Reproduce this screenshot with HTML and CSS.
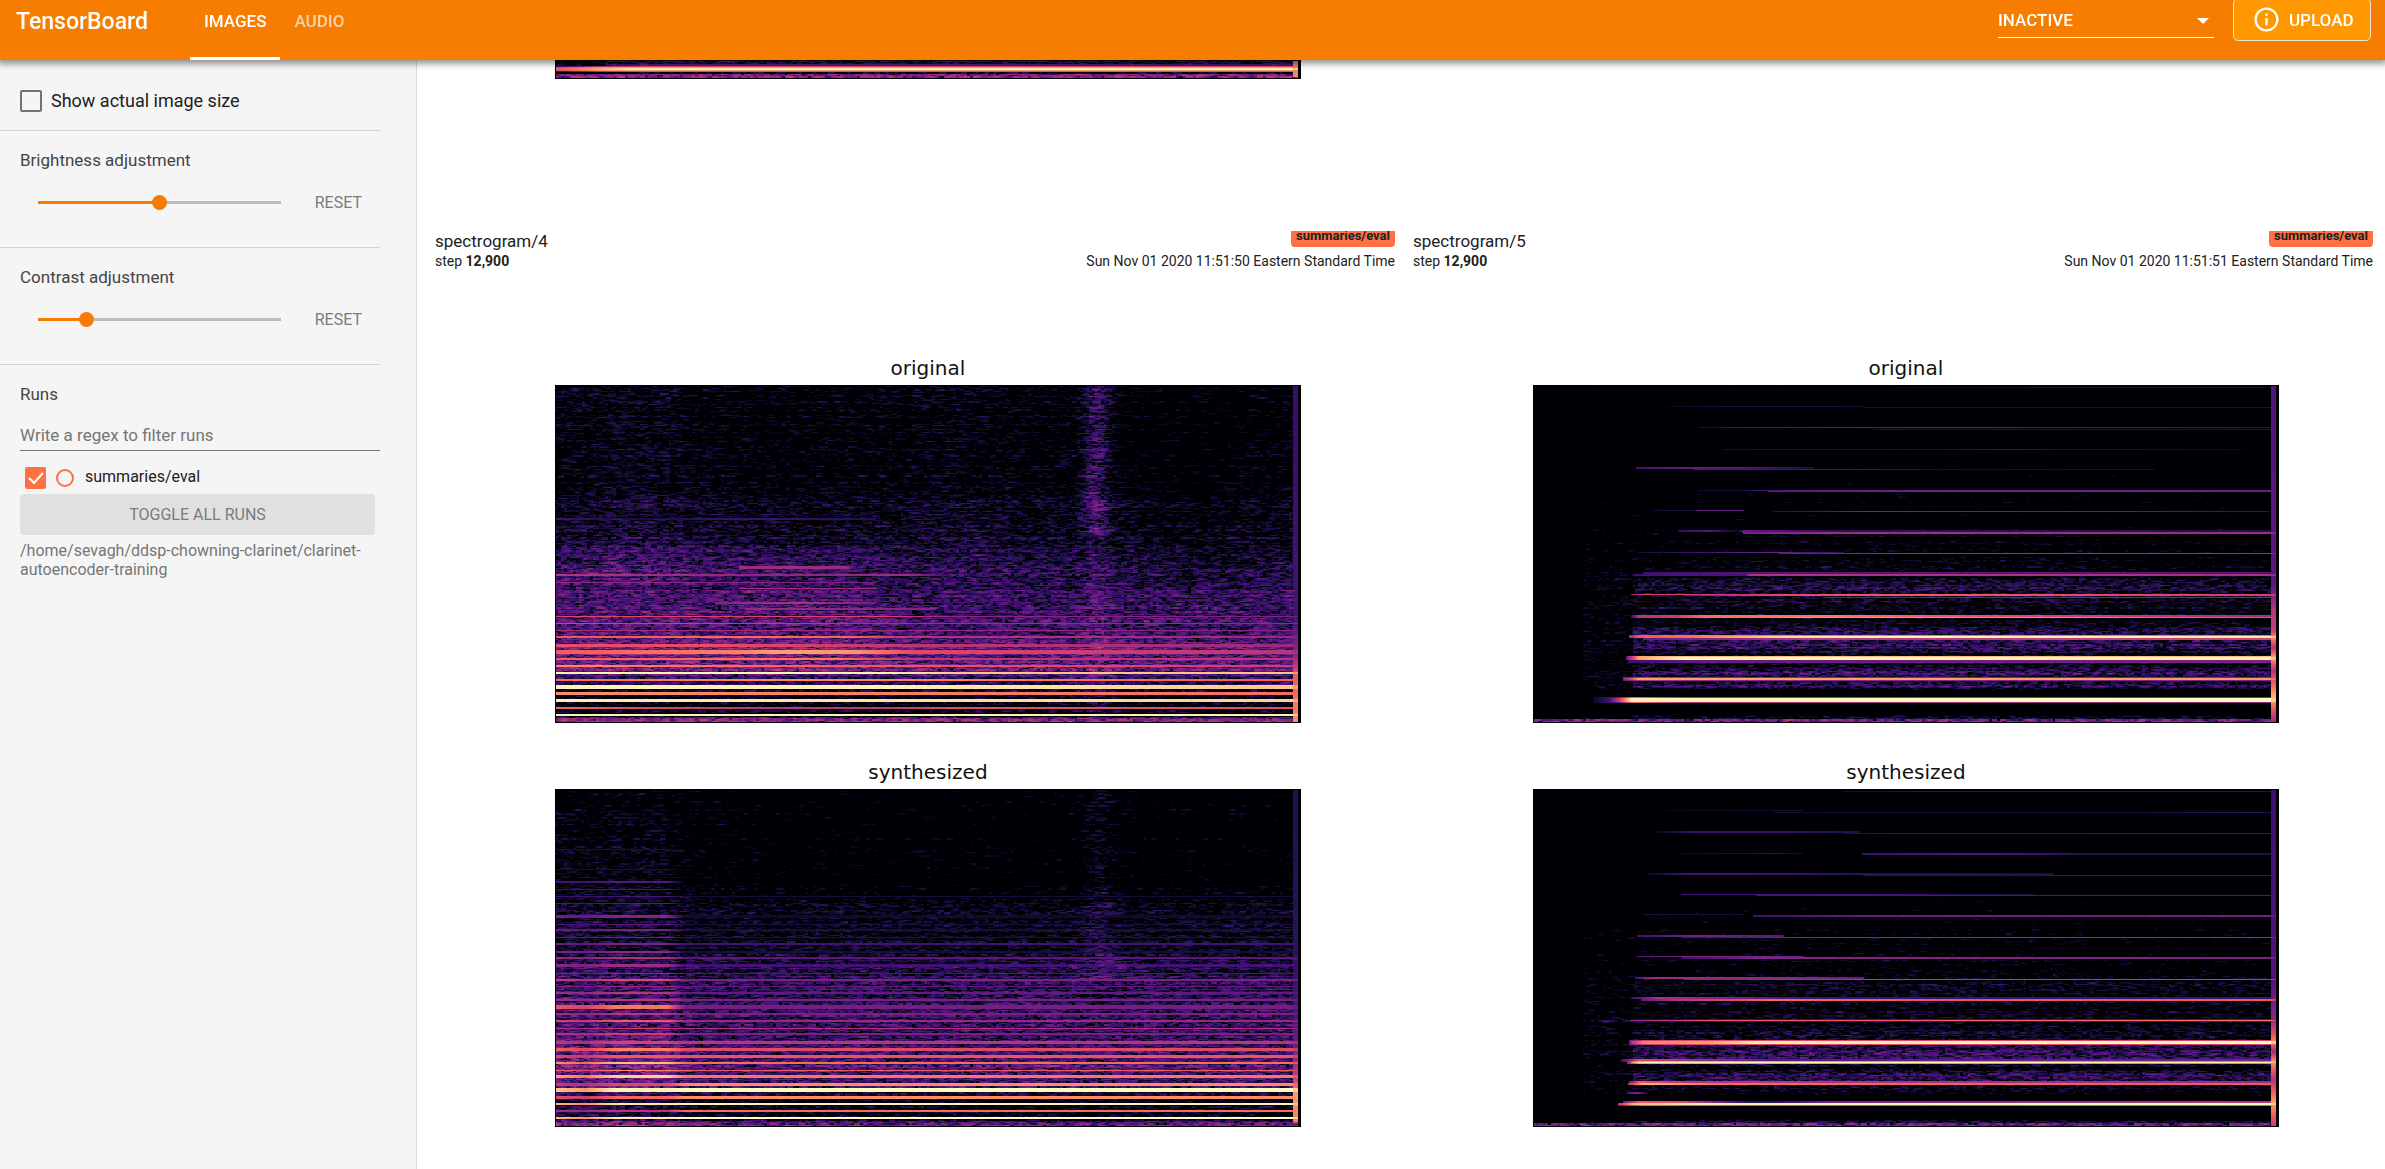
FILE: index.html
```html
<!DOCTYPE html>
<html lang="en">
<head>
<meta charset="utf-8">
<title>TensorBoard</title>
<link rel="stylesheet" href="styles.css">
</head>
<body>
<header class="toolbar">
  <h1 class="brand">TensorBoard</h1>
  <nav class="tabs">
    <a class="tab tab-active" href="#images">IMAGES</a>
    <a class="tab" href="#audio">AUDIO</a>
  </nav>
  <div class="inactive">
    <select class="inactive-select" aria-label="Inactive dashboards">
      <option>INACTIVE</option>
    </select>
    <svg class="caret" viewBox="0 0 12 6" aria-hidden="true"><path d="M0 0h12L6 6z" fill="#fff"/></svg>
  </div>
  <button class="upload" type="button">
    <svg class="upload-icon" viewBox="0 0 24 24" aria-hidden="true"><path fill="#fff" d="M11 17h2v-6h-2v6zm1-15C6.480 2 2 6.480 2 12s4.480 10 10 10 10-4.480 10-10S17.520 2 12 2zm0 18c-4.410 0-8-3.590-8-8s3.590-8 8-8 8 3.590 8 8-3.590 8-8 8zM11 9h2V7h-2v2z"/></svg>
    <span>UPLOAD</span>
  </button>
</header>

<div class="page">
  <aside class="sidebar">
    <section class="section section-size">
      <label class="size-label"><input class="size-box" type="checkbox">Show actual image size</label>
    </section>
    <section class="section section-slider">
      <label class="section-title" for="brightness">Brightness adjustment</label>
      <div class="slider-row">
        <input class="slider slider-brightness" id="brightness" type="range" min="0" max="100" value="50">
        <button class="reset" type="button">RESET</button>
      </div>
    </section>
    <section class="section section-slider">
      <label class="section-title" for="contrast">Contrast adjustment</label>
      <div class="slider-row">
        <input class="slider slider-contrast" id="contrast" type="range" min="0" max="100" value="18">
        <button class="reset" type="button">RESET</button>
      </div>
    </section>
    <section class="section section-runs">
      <label class="section-title" for="filter">Runs</label>
      <input class="filter" id="filter" type="text" placeholder="Write a regex to filter runs">
      <div class="run">
        <input class="run-box" id="run" type="checkbox" checked>
        <span class="run-dot"></span>
        <label class="run-name" for="run">summaries/eval</label>
      </div>
      <button class="toggle" type="button">TOGGLE ALL RUNS</button>
      <p class="logdir">/home/sevagh/ddsp-chowning-clarinet/clarinet-autoencoder-training</p>
    </section>
  </aside>

  <main class="cards">
    <article class="card card-scrolled">
      <div class="figure"><canvas class="plot" id="previous" width="746" height="19"></canvas></div>
    </article>
    <article class="card">
      <div class="card-head">
        <h2 class="tag">spectrogram/4</h2>
        <div class="badge-clip"><span class="badge">summaries/eval</span></div>
        <div class="step">step <b>12,900</b></div>
        <div class="time">Sun Nov 01 2020 11:51:50 Eastern Standard Time</div>
      </div>
      <div class="figure">
        <h3 class="plot-title">original</h3>
        <canvas class="plot" id="original4" width="746" height="338"></canvas>
        <h3 class="plot-title">synthesized</h3>
        <canvas class="plot" id="synth4" width="746" height="338"></canvas>
      </div>
    </article>
    <article class="card">
      <div class="card-head">
        <h2 class="tag">spectrogram/5</h2>
        <div class="badge-clip"><span class="badge">summaries/eval</span></div>
        <div class="step">step <b>12,900</b></div>
        <div class="time">Sun Nov 01 2020 11:51:51 Eastern Standard Time</div>
      </div>
      <div class="figure">
        <h3 class="plot-title">original</h3>
        <canvas class="plot" id="original5" width="746" height="338"></canvas>
        <h3 class="plot-title">synthesized</h3>
        <canvas class="plot" id="synth5" width="746" height="338"></canvas>
      </div>
    </article>
  </main>
</div>
<script src="spectrogram.js"></script>
</body>
</html>
```
FILE: styles.css
```css
* { box-sizing: border-box; }

body {
  margin: 0;
  background: #fff;
  color: #212121;
  font-family: Roboto, sans-serif;
  font-size: 16px;
}

h1, h2, h3, p { margin: 0; font-weight: 400; }
button, input, select { font-family: inherit; font-size: 16px; margin: 0; }

.toolbar {
  position: relative;
  z-index: 1;
  display: flex;
  align-items: flex-start;
  height: 60px;
  padding: 0 14px 0 16px;
  background: #f77d00;
  color: #fff;
  font-size: 17px;
  box-shadow: 0 2px 6px 2px rgba(0, 0, 0, .4);
}

.brand { width: 174px; font-size: 23px; font-weight: 500; line-height: 44px; }

.tabs { display: flex; flex: 1; }
.tab {
  height: 60px;
  padding: 0 14px;
  color: rgba(255, 255, 255, .65);
  font-weight: 500;
  line-height: 43px;
  text-decoration: none;
}
.tab-active { color: #fff; border-bottom: 3px solid #fff; }

.inactive { position: relative; width: 216px; margin-right: 19px; }
.inactive-select {
  width: 100%;
  height: 38px;
  padding: 3px 0 0;
  border: 0;
  border-bottom: 1px solid #fff;
  border-radius: 0;
  background: transparent;
  color: #fff;
  font-size: 17px;
  font-weight: 500;
  appearance: none;
}
.caret { position: absolute; top: 18px; right: 5px; width: 12px; height: 6px; }

.upload {
  display: flex;
  align-items: center;
  gap: 8px;
  width: 138px;
  height: 43px;
  margin-top: -2px;
  padding: 0 0 0 18px;
  border: 1px solid #f4e3cb;
  border-radius: 5px;
  background: #ff9800;
  color: #fff;
  font-size: 17px;
  font-weight: 500;
}
.upload-icon { width: 29px; height: 29px; }

.page { display: flex; min-height: calc(100vh - 60px); }

.sidebar {
  flex: none;
  width: 417px;
  padding-right: 36px;
  border-right: 1px solid #dcdcdc;
  background: #f5f5f5;
}
.section { padding: 0 0 0 20px; border-bottom: 1px solid #d2d2d2; }
.section-size { height: 71px; padding-top: 30px; }
.section-slider { height: 117px; padding-top: 18px; }
.section-runs { padding-top: 18px; border-bottom: 0; }

.size-label { display: flex; align-items: center; gap: 9px; font-size: 18px; line-height: 22px; }
.size-box {
  width: 22px;
  height: 22px;
  border: 2px solid #737373;
  border-radius: 2px;
  appearance: none;
}

.section-title { display: block; color: #444; font-size: 17px; line-height: 22px; }

.slider-row { display: flex; align-items: center; justify-content: space-between; height: 42px; margin-top: 10px; padding: 0 18px; }
.slider { width: 243px; height: 16px; background: transparent; appearance: none; }
.slider::-webkit-slider-runnable-track { height: 3px; background: linear-gradient(to right, #f77d00 20%, #bdbdbd 20%); }
.slider-brightness::-webkit-slider-runnable-track { background: linear-gradient(to right, #f77d00 50%, #bdbdbd 50%); }
.slider::-webkit-slider-thumb {
  width: 15px;
  height: 15px;
  margin-top: -6px;
  border-radius: 50%;
  background: #f77d00;
  appearance: none;
}
.reset { padding: 0; border: 0; background: transparent; color: #7b7b7b; }

.filter {
  display: block;
  width: 100%;
  height: 32px;
  margin-top: 14px;
  padding: 0;
  border: 0;
  border-bottom: 1px solid #737373;
  background: transparent;
  font-size: 17px;
}
.filter::placeholder { color: #757575; opacity: 1; }

.run { display: flex; align-items: center; height: 22px; margin-top: 16px; padding-left: 5px; }
.run-box {
  width: 21px;
  height: 22px;
  border-radius: 2px;
  background: #ff7043 url("data:image/svg+xml,%3Csvg xmlns='http://www.w3.org/2000/svg' viewBox='0 0 21 22'%3E%3Cpath d='M4 11l5 5 9-10' fill='none' stroke='white' stroke-width='2'/%3E%3C/svg%3E");
  appearance: none;
}
.run-dot { width: 18px; height: 18px; margin: 0 11px 0 10px; border: 2px solid #ff7043; border-radius: 50%; }
.run-name { padding-bottom: 3px; }

.toggle {
  display: block;
  width: 355px;
  height: 41px;
  margin-top: 5px;
  border: 0;
  border-radius: 4px;
  background: #e0e0e0;
  color: #7b7b7b;
}
.logdir { margin-top: 6px; color: #757575; line-height: 19px; }

.cards {
  display: grid;
  flex: 1;
  grid-template-columns: 1fr 1fr;
  align-content: start;
  column-gap: 18px;
  padding: 0 12px 40px 18px;
}
.card-scrolled { grid-column: 1 / 2; margin-bottom: 152px; }
.card-scrolled + .card { grid-column: 1; }

.card-head { display: grid; grid-template-columns: 1fr auto; row-gap: 2px; margin-bottom: 84px; }
.tag { font-size: 17px; line-height: 20px; }
.badge-clip { display: flex; align-items: flex-end; justify-content: flex-end; height: 16px; overflow: hidden; }
.badge { padding: 0 5px; border-radius: 4px; background: #ff7043; font-size: 13px; font-weight: 700; line-height: 22px; }
.step, .time { font-size: 14px; line-height: 16px; }
.time { text-align: right; }

.figure { padding: 0 9.8% 0 12.5%; }
.plot-title { padding-bottom: 2px; font-family: "DejaVu Sans", sans-serif; font-size: 20px; line-height: 30px; text-align: center; color: #111; }
.plot { display: block; width: 100%; height: auto; }
.plot + .plot-title { margin-top: 34px; }
```
FILE: spectrogram.js
```javascript
// Magma colour map, sampled at even steps.
const MAGMA = [
  [0, 0, 4], [12, 9, 38], [28, 16, 68], [54, 16, 107], [79, 18, 123], [104, 28, 129],
  [129, 37, 129], [155, 46, 127], [181, 54, 122], [207, 64, 112], [229, 80, 100],
  [244, 104, 92], [251, 135, 97], [254, 167, 114], [254, 196, 136], [254, 227, 165], [252, 253, 191]
];

function colour(v) {
  const t = Math.max(0, Math.min(0.9999, v)) * 16;
  const i = Math.floor(t), f = t - i;
  return MAGMA[i].map((c, k) => c + (MAGMA[i + 1][k] - c) * f);
}

// Linear interpolation through [position, value] stops.
function ramp(stops, p) {
  if (p <= stops[0][0]) return stops[0][1];
  for (let i = 1; i < stops.length; i++) {
    if (p <= stops[i][0]) {
      const [a, va] = stops[i - 1], [b, vb] = stops[i];
      return va + (vb - va) * (p - a) / (b - a);
    }
  }
  return stops[stops.length - 1][1];
}

function randomSource(seed) {
  return () => {
    seed = (seed + 0x6D2B79F5) | 0;
    let t = Math.imul(seed ^ (seed >>> 15), 1 | seed);
    t = (t + Math.imul(t ^ (t >>> 7), 61 | t)) ^ t;
    return ((t ^ (t >>> 14)) >>> 0) / 4294967296;
  };
}

// Log magnitude of smoothed complex noise, one value per spectrogram cell.
function noiseGrid(cols, rows, seed) {
  const rnd = randomSource(seed);
  const g = () => rnd() + rnd() + rnd() - 1.5;
  const grid = [];
  for (let r = 0; r < rows; r++) {
    const row = new Float32Array(cols);
    const gain = (rnd() - 0.5) * 0.6;
    let p1 = [g(), g()], p2 = [g(), g()];
    for (let c = 0; c < cols; c++) {
      const p = [g(), g()];
      const a = 0.8 * p[0] + p1[0] + 0.8 * p2[0], b = 0.8 * p[1] + p1[1] + 0.8 * p2[1];
      row[c] = Math.max(-2.5, Math.log((a * a + b * b) * 0.8 + 1e-4) / 2 + gain);
      p2 = p1; p1 = p;
    }
    grid.push(row);
  }
  return grid;
}

const CELL_W = 2.9, CELL_H = 1.32;

// lines: [y, thickness, [[x, value], ...]]; floor(x, y): local noise level.
function draw(id, seed, floor, lines, edge) {
  const canvas = document.getElementById(id);
  const w = canvas.width, h = canvas.height;
  const ctx = canvas.getContext("2d");
  const img = ctx.createImageData(w, h);
  const grid = noiseGrid(Math.ceil(w / CELL_W) + 1, Math.ceil(h / CELL_H) + 1, seed);
  for (let y = 0; y < h; y++) {
    const active = lines.filter(l => y >= l[0] - Math.floor(l[1] / 2) && y < l[0] - Math.floor(l[1] / 2) + l[1]);
    for (let x = 0; x < w; x++) {
      let v = floor(x, y) + 0.16 * grid[Math.floor(y / CELL_H)][Math.floor(x / CELL_W)];
      for (const l of active) {
        if (x >= l[2][0][0] && x <= l[2][l[2].length - 1][0]) v = Math.max(v, ramp(l[2], x));
      }
      if (x >= w - 8 && x < w - 3) v = Math.max(v * 0.9, ramp(edge, y));
      if (x < 1 || x >= w - 3 || y < 1 || y >= h - 1) v = 0;
      const c = colour(v), o = (y * w + x) * 4;
      img.data[o] = c[0]; img.data[o + 1] = c[1]; img.data[o + 2] = c[2]; img.data[o + 3] = 255;
    }
  }
  ctx.putImageData(img, 0, 0);
}

const END = 742;
const bump = (x, centre, width) => Math.exp(-(((x - centre) / width) ** 2));

draw("previous", 3,
  (x, y) => (y < 6 ? 0.18 : y < 14 ? 0.1 : 0.42) - (x < 50 && y < 14 ? 0.15 : 0),
  [
    [5, 2, [[50, 0.2], [120, 0.3], [END, 0.25]]],
    [9, 6, [[0, 0.2], [50, 0.5], [90, 0.62], [END, 0.62]]],
    [9, 4, [[0, 0.6], [50, 0.8], [END, 0.8]]],
    [9, 2, [[0, 0.65], [50, 0.85], [80, 0.97], [END, 0.97]]]
  ], [[0, 0.7], [16, 0.75], [17, 0]]);

const floor4 = [[0, 0], [85, 0], [120, 0.05], [160, 0.09], [180, 0.15], [210, 0.2], [240, 0.26], [262, 0.32], [285, 0.33], [295, 0.2], [305, 0.08], [320, 0.02], [331, 0.05], [333, 0.4], [336, 0.45]];
draw("original4", 11,
  (x, y) => ramp(floor4, y)
    + (y < 330 ? 0.24 * bump(x, 541, 14) * (y < 150 ? 1 : 0.35) : 0)
    + (y < 200 ? 0.06 * bump(x, 80, 60) + 0.03 * bump(x, 400, 60) - 0.04 * bump(x, 640, 80) : 0)
    + (y > 160 && y < 290 ? 0.05 * (1 - ramp([[300, 0], [360, 1]], x)) : 0),
  [
    [134, 2, [[0, 0.2], [90, 0.1], [180, 0.2], [320, 0.14]]],
    [182, 3, [[184, 0.44], [290, 0.44], [300, 0.2]]],
    [190, 2, [[0, 0.5], [185, 0.4], [290, 0.4], [350, 0.45], [400, 0.15]]],
    [197, 1, [[0, 0.42], [320, 0.34]]],
    [203, 1, [[184, 0.46], [320, 0.42]]],
    [218, 2, [[160, 0.38], [240, 0.48], [320, 0.34]]],
    [224, 2, [[190, 0.42], [380, 0.38]]],
    [231, 1, [[0, 0.6], [330, 0.58], [400, 0.4], [END, 0.36]]],
    [238, 1, [[0, 0.58], [260, 0.52], [340, 0.45], [END, 0.4]]],
    [245, 1, [[0, 0.45], [END, 0.38]]],
    [252, 2, [[0, 0.64], [184, 0.7], [300, 0.68], [350, 0.5], [END, 0.42]]],
    [260, 3, [[0, 0.62], [160, 0.62], [340, 0.52], [END, 0.42]]],
    [267, 4, [[0, 0.66], [184, 0.74], [220, 0.8], [300, 0.78], [360, 0.6], [END, 0.5]]],
    [274, 2, [[0, 0.66], [280, 0.72], [350, 0.5], [END, 0.5]]],
    [281, 2, [[0, 0.76], [340, 0.65], [END, 0.55]]],
    [288, 2, [[0, 0.98], [330, 0.98], [400, 0.88], [END, 0.88]]],
    [295, 2, [[0, 0.7], [240, 0.76], [END, 0.66]]],
    [302, 4, [[0, 0.98], [350, 0.97], [END, 0.88]]],
    [308, 3, [[0, 0.76], [END, 0.7]]],
    [315, 3, [[0, 0.97], [END, 0.9]]],
    [323, 2, [[0, 0.68], [200, 0.5], [330, 0.52], [400, 0.62], [END, 0.62]]],
    [330, 2, [[0, 0.98], [END, 0.97]]]
  ], [[0, 0.18], [230, 0.22], [270, 0.4], [290, 0.65], [336, 0.76]]);

// Harmonics at a seven pixel pitch: [y, thickness, level at left, level of the body].
const harmonics = [
  [60, 1, 0.12, 0], [80, 1, 0.12, 0], [93, 2, 0.27, 0], [100, 1, 0.25, 0], [107, 1, 0.24, 0.1], [114, 1, 0.28, 0],
  [127, 3, 0.38, 0.08], [135, 1, 0.28, 0.12], [141, 2, 0.34, 0.1], [148, 1, 0.34, 0.14],
  [155, 2, 0.36, 0.22], [163, 2, 0.4, 0.1], [169, 2, 0.47, 0.28], [176, 3, 0.44, 0.22],
  [184, 1, 0.4, 0.25], [191, 2, 0.6, 0.36], [197, 1, 0.42, 0.3], [204, 2, 0.5, 0.3],
  [211, 2, 0.5, 0.35], [218, 4, 0.72, 0.34], [225, 2, 0.5, 0.35], [232, 2, 0.65, 0.42],
  [239, 1, 0.55, 0.48], [245, 2, 0.55, 0.35], [253, 3, 0.58, 0.5], [260, 3, 0.74, 0.6],
  [267, 3, 0.66, 0.64], [274, 2, 0.86, 0.7], [281, 1, 0.75, 0.65], [287, 3, 0.9, 0.72],
  [295, 3, 0.6, 0.76], [301, 4, 0.98, 1], [308, 3, 0.68, 0.76], [315, 2, 0.95, 0.97],
  [322, 2, 0.5, 0.7], [329, 2, 0.96, 1]
];
const floorS4 = [[0, -0.03], [80, -0.03], [110, 0.02], [160, 0.08], [180, 0.15], [215, 0.22], [250, 0.22], [280, 0.3], [300, 0.22], [312, 0.05], [330, 0.05], [334, 0.35]];
draw("synth4", 29,
  (x, y) => ramp(floorS4, y) + 0.1 * bump(x, 545, 18) * (y < 190 ? 1 : 0)
    + (y > 20 ? (y > 245 ? 0.1 : 0.05) * (1 - ramp([[112, 0], [140, 1]], x)) : 0)
    - (y < 110 ? 0.04 * ramp([[100, 0], [250, 1]], x) : 0),
  harmonics.map(([y, t, left, body]) => [y, t, [
    [0, left * 0.9], [30, left * 0.8], [60, left], [112, left], [130, body], [END, body]
  ]]), [[0, 0.14], [160, 0.16], [250, 0.3], [290, 0.55], [305, 0.8], [332, 0.72], [336, 0]]);

// Sparse floor for the isolated-note plots: bands sit between the harmonics.
function noteFloor(bands, start) {
  return (x, y) => {
    if (y >= 334) return 0.38;
    let v = ramp(bands, y) + 0.03;
    if (x < 50) return -1;
    if (x < start) v = Math.min(v, 0) - 0.01;
    return v + (x > 200 && x < 560 ? 0.02 : 0);
  };
}

const bands5 = [[0, -0.2], [100, -0.16], [115, -0.09], [125, -0.14], [155, -0.08], [170, -0.08], [178, -0.02], [192, -0.04], [198, 0.1], [208, 0.07], [220, 0], [236, -0.03], [246, 0.1], [262, 0.14], [271, -0.02], [278, 0], [288, 0.17], [292, 0.02], [301, 0.15], [304, -0.1], [308, -0.3], [328, -0.3], [331, 0.02]];
draw("original5", 47, noteFloor(bands5, 100), [
  [2, 1, [[360, 0.04], [500, 0.1], [END, 0.1]]],
  [21, 1, [[130, 0.04], [200, 0.12], [330, 0.1]]],
  [22, 1, [[330, 0.12], [END, 0.12]]],
  [42, 1, [[165, 0.08], [220, 0.24], [420, 0.32], [580, 0.24], [END, 0.18]]],
  [44, 1, [[340, 0.14], [END, 0.14]]],
  [64, 1, [[190, 0.1], [330, 0.12], [480, 0.16], [710, 0.06]]],
  [83, 2, [[103, 0.22], [150, 0.3], [210, 0.26], [280, 0.1]]],
  [84, 1, [[160, 0.26], [320, 0.2], [430, 0.1], [620, 0.12]]],
  [105, 1, [[165, 0.1], [210, 0.1], [220, 0.2], [280, 0.3], [END, 0.3]]],
  [106, 1, [[235, 0.3], [420, 0.38], [END, 0.34]]],
  [125, 1, [[120, 0.1], [163, 0.12], [164, 0.32], [210, 0.28]]],
  [126, 1, [[240, 0.14], [330, 0.34], [620, 0.28], [735, 0.18]]],
  [146, 2, [[145, 0.16], [175, 0.26], [205, 0.04], [210, 0.3], [300, 0.16], [END, 0.14]]],
  [148, 2, [[210, 0.34], [300, 0.44], [END, 0.44]]],
  [167, 1, [[105, 0.1], [200, 0.28], [245, 0.34], [310, 0.16]]],
  [168, 1, [[245, 0.3], [400, 0.42], [END, 0.44]]],
  [188, 2, [[110, 0.2], [210, 0.26], [END, 0.26]]],
  [190, 2, [[100, 0.2], [130, 0.24], [212, 0.24], [216, 0.48], [END, 0.46]]],
  [209, 1, [[98, 0.4], [110, 0.6], [200, 0.54], [260, 0.62]]],
  [210, 2, [[150, 0.3], [240, 0.6], [380, 0.66], [END, 0.56]]],
  [212, 1, [[290, 0.3], [END, 0.38]]],
  [231, 3, [[98, 0.2], [105, 0.5], [140, 0.54], [170, 0.7], [300, 0.72], [450, 0.62], [END, 0.44]]],
  [232, 1, [[150, 0.5], [260, 0.78], [500, 0.75], [END, 0.62]]],
  [251, 3, [[96, 0.4], [105, 0.65], [170, 0.72], [END, 0.7]]],
  [252, 2, [[97, 0.5], [170, 0.74], [250, 0.92], [330, 0.99], [END, 0.96]]],
  [254, 2, [[110, 0.3], [280, 0.5], [END, 0.58]]],
  [274, 7, [[95, 0.2], [160, 0.3], [END, 0.36]]],
  [273, 4, [[93, 0.3], [105, 0.8], [140, 0.86], [END, 0.86]]],
  [273, 3, [[96, 0.5], [115, 0.85], [150, 0.98], [END, 0.97]]],
  [294, 4, [[90, 0.3], [110, 0.5], [170, 0.4], [END, 0.36]]],
  [294, 2, [[90, 0.4], [105, 0.8], [END, 0.78]]],
  [315, 6, [[60, 0.05], [85, 0.3], [100, 0.68], [150, 0.5], [END, 0.4]]],
  [315, 4, [[75, 0.2], [90, 0.7], [98, 0.98], [END, 1]]]
], [[0, 0.26], [200, 0.28], [225, 0.5], [245, 0.55], [252, 0.78], [262, 0.5], [272, 0.82], [285, 0.5], [312, 0.85], [336, 0.45]]);

const bandsS5 = [[0, -0.3], [110, -0.16], [140, -0.1], [185, -0.06], [196, 0.02], [204, 0], [218, -0.02], [238, -0.01], [246, 0.05], [258, 0.12], [268, 0.16], [275, 0.07], [279, -0.05], [286, 0.17], [294, 0.08], [300, 0.02], [307, -0.16], [328, -0.22], [332, 0.08]];
draw("synth5", 71, noteFloor(bandsS5, 100), [
  [2, 1, [[310, 0.08], [400, 0.16], [560, 0.16], [END, 0.14]]],
  [21, 1, [[130, 0.04], [270, 0.1]]],
  [23, 1, [[240, 0.08], [480, 0.12], [END, 0.16]]],
  [43, 2, [[120, 0.04], [155, 0.18], [220, 0.2], [325, 0.14]]],
  [44, 1, [[310, 0.14], [500, 0.2], [END, 0.24]]],
  [64, 1, [[145, 0.06], [240, 0.16], [270, 0.08]]],
  [65, 2, [[329, 0.2], [450, 0.26], [560, 0.14], [END, 0.14]]],
  [85, 2, [[115, 0.06], [155, 0.22], [215, 0.22], [320, 0.16], [520, 0.12]]],
  [86, 1, [[330, 0.16], [END, 0.2]]],
  [105, 1, [[148, 0.22], [330, 0.24], [500, 0.1]]],
  [106, 1, [[223, 0.24], [END, 0.26]]],
  [125, 1, [[110, 0.14], [210, 0.1]]],
  [127, 2, [[220, 0.2], [340, 0.32], [END, 0.34]]],
  [147, 2, [[104, 0.22], [160, 0.34], [250, 0.28]]],
  [148, 1, [[150, 0.2], [280, 0.38], [END, 0.42]]],
  [167, 1, [[103, 0.26], [160, 0.38], [270, 0.3]]],
  [169, 2, [[148, 0.2], [230, 0.38], [END, 0.36]]],
  [189, 2, [[102, 0.24], [120, 0.44], [250, 0.4], [330, 0.3]]],
  [190, 1, [[150, 0.36], [330, 0.5], [END, 0.52]]],
  [209, 2, [[98, 0.2], [125, 0.48], [170, 0.4], [290, 0.2], [END, 0.2]]],
  [211, 2, [[108, 0.3], [145, 0.5], [240, 0.7], [400, 0.64], [END, 0.66]]],
  [231, 3, [[98, 0.1], [160, 0.2], [END, 0.28]]],
  [231, 1, [[97, 0.4], [180, 0.64], [END, 0.7]]],
  [253, 5, [[96, 0.3], [110, 0.55], [150, 0.6], [END, 0.58]]],
  [253, 3, [[98, 0.5], [110, 0.74], [180, 0.8], [220, 0.94], [END, 0.99]]],
  [271, 3, [[88, 0.2], [105, 0.6], [160, 0.45], [240, 0.28], [END, 0.35]]],
  [273, 3, [[94, 0.4], [105, 0.8], [END, 0.72]]],
  [273, 1, [[98, 0.8], [112, 0.98], [END, 0.96]]],
  [294, 4, [[96, 0.3], [105, 0.65], [150, 0.5], [END, 0.42]]],
  [295, 2, [[95, 0.5], [110, 0.84], [180, 0.7], [END, 0.65]]],
  [304, 2, [[94, 0.24], [104, 0.36], [114, 0.1]]],
  [313, 3, [[90, 0.3], [105, 0.65], [150, 0.6], [215, 0.15], [235, 0.15], [300, 0.36], [END, 0.5]]],
  [316, 2, [[85, 0.3], [110, 0.65], [220, 0.6], [END, 0.66]]],
  [315, 2, [[85, 0.5], [100, 0.85], [170, 0.97], [END, 1]]]
], [[0, 0.2], [190, 0.26], [230, 0.4], [252, 0.75], [262, 0.45], [272, 0.78], [290, 0.5], [313, 0.8], [336, 0.55]]);
```
